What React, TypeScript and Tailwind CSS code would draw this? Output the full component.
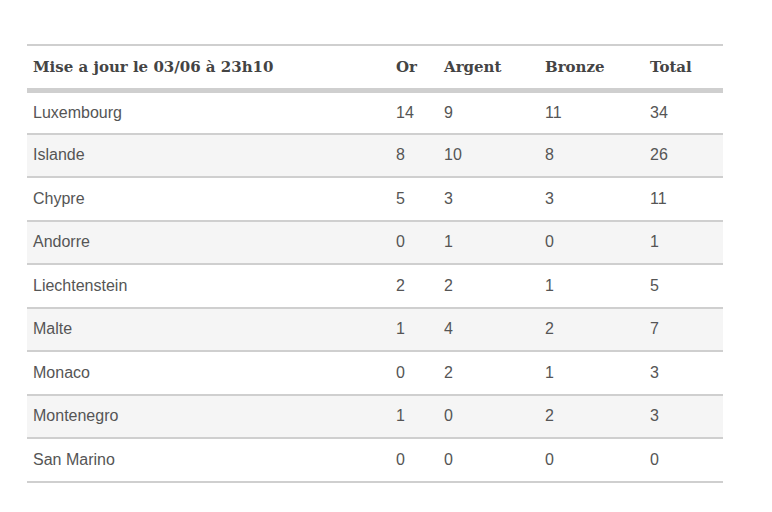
const ROWS: [string, number, number, number, number][] = [
  ['Luxembourg', 14, 9, 11, 34],
  ['Islande', 8, 10, 8, 26],
  ['Chypre', 5, 3, 3, 11],
  ['Andorre', 0, 1, 0, 1],
  ['Liechtenstein', 2, 2, 1, 5],
  ['Malte', 1, 4, 2, 7],
  ['Monaco', 0, 2, 1, 3],
  ['Montenegro', 1, 0, 2, 3],
  ['San Marino', 0, 0, 0, 0],
]

export default function App() {
  return (
    <div className="min-h-[512px] w-[772px] bg-white pl-[27px] pt-[44px]">
      <table className="w-[696px] table-fixed border-collapse border-t-2 border-[#cfcfcf]">
        <colgroup>
          <col className="w-[363px]" />
          <col className="w-[48px]" />
          <col className="w-[101px]" />
          <col className="w-[105px]" />
          <col className="w-[79px]" />
        </colgroup>
        <thead>
          <tr className="h-[45px] border-b-[5px] border-[#cfcfcf] text-left font-['DejaVu_Serif',serif] text-[15px] font-bold text-[#444]">
            <th className="px-[6px] font-bold">Mise a jour le 03/06 à 23h10</th>
            <th className="px-[6px] font-bold">Or</th>
            <th className="px-[6px] font-bold">Argent</th>
            <th className="px-[6px] font-bold">Bronze</th>
            <th className="px-[6px] font-bold">Total</th>
          </tr>
        </thead>
        <tbody className="font-['Liberation_Sans',Arial,sans-serif] text-[16px] text-[#555]">
          {ROWS.map((r, i) => (
            <tr key={r[0]} className={`h-[43.5px] border-b-2 border-[#cfcfcf] ${i % 2 ? 'bg-[#f5f5f5]' : 'bg-white'}`}>
              {r.map((c, j) => (
                <td key={j} className="px-[6px]">{c}</td>
              ))}
            </tr>
          ))}
        </tbody>
      </table>
    </div>
  )
}
